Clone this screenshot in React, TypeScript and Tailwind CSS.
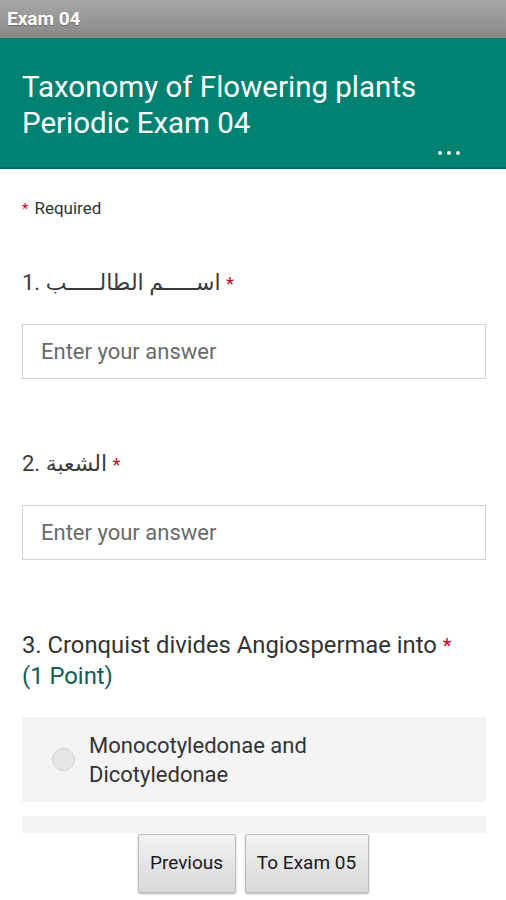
import React from 'react';

const font = { fontFamily: 'Roboto, "Noto Sans", "DejaVu Sans", sans-serif' };

const Star = () => <span className="text-[#d0021b] text-[0.85em] leading-none">*</span>;

const TextQuestion = ({ label, className }: { label: string; className?: string }) => (
  <div className={className}>
    <div className="h-[28px] text-[22px] leading-[28px] text-[#3a3a3a]">
      {label} <Star />
    </div>
    <div className="mt-[27px] h-[55px] border border-[#d2d2d2] bg-white flex items-center pl-[18px]">
      <span className="text-[22px] text-[#6a6a6a]">Enter your answer</span>
    </div>
  </div>
);

export default function App() {
  return (
    <div className="w-[506px] h-[900px] flex flex-col bg-white overflow-hidden" style={font}>
      {/* app title bar */}
      <div className="h-[38px] shrink-0 bg-gradient-to-b from-[#a8a8a8] to-[#878787] flex items-center pl-[7px]">
        <span className="text-[19px] font-bold text-white [text-shadow:0_1px_1px_rgba(0,0,0,0.3)]">Exam 04</span>
      </div>

      {/* form header */}
      <div className="h-[131px] shrink-0 bg-[#008272] border-b-2 border-[#006e60] px-[22px] pt-[31px] relative">
        <h1 className="text-[29.5px] leading-[36px] text-white">
          Taxonomy of Flowering plants
          <br />
          Periodic Exam 04
        </h1>
        <div className="absolute right-[46px] bottom-[12px] flex gap-[5px]">
          <span className="w-[4px] h-[4px] rounded-full bg-[#e6f3f1]" />
          <span className="w-[4px] h-[4px] rounded-full bg-[#e6f3f1]" />
          <span className="w-[4px] h-[4px] rounded-full bg-[#e6f3f1]" />
        </div>
      </div>

      {/* form body */}
      <div className="flex-1 overflow-hidden px-[22px] pr-[20px]">
        <div className="mt-[29px] h-[20px] text-[17px] leading-[20px] text-[#333]">
          <Star /> <span className="ml-[2px]">Required</span>
        </div>

        <TextQuestion className="mt-[51px]" label="1. اســـــم الطالـــــب" />
        <TextQuestion className="mt-[71px]" label="2. الشعبة" />

        <div className="mt-[70px] text-[23.8px] leading-[31px] text-[#333]">
          <div className="h-[31px]">
            3. Cronquist divides Angiospermae into <Star />
          </div>
          <div className="text-[#0d5e56]">(1 Point)</div>
        </div>

        <div className="mt-[25px] h-[85px] bg-[#f4f4f4] flex items-center pl-[30px]">
          <span className="w-[23px] h-[23px] rounded-full bg-[#e6e6e6] border border-[#cfcfcf] shrink-0" />
          <span className="ml-[14px] text-[22px] leading-[29px] text-[#333]">
            Monocotyledonae and
            <br />
            Dicotyledonae
          </span>
        </div>

        <div className="mt-[14px] h-[40px] bg-[#f4f4f4]" />
      </div>

      {/* navigation */}
      <div className="h-[67px] shrink-0 flex justify-center gap-[9px] pt-[1px]">
        <button className="h-[59px] w-[98px] rounded-[2px] border border-[#bdbdbd] bg-gradient-to-b from-[#f2f2f2] to-[#d8d8d8] shadow-[0_1px_2px_rgba(0,0,0,0.3)] text-[19px] text-[#1a1a1a]">
          Previous
        </button>
        <button className="h-[59px] w-[124px] rounded-[2px] border border-[#bdbdbd] bg-gradient-to-b from-[#f2f2f2] to-[#d8d8d8] shadow-[0_1px_2px_rgba(0,0,0,0.3)] text-[19px] text-[#1a1a1a]">
          To Exam 05
        </button>
      </div>
    </div>
  );
}
